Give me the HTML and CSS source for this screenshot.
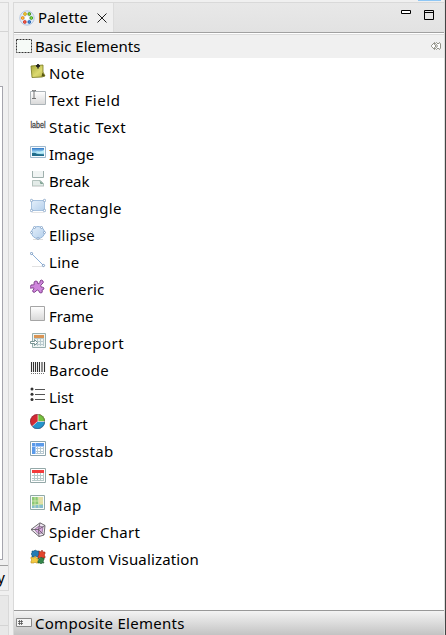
FILE: index.html
```html
<!DOCTYPE html>
<html lang="en">
<head>
<meta charset="utf-8">
<title>Palette</title>
<link rel="stylesheet" href="styles.css">
</head>
<body>
<svg width="0" height="0" class="defs"><defs>
<linearGradient id="gray" x2="0" y2="1"><stop stop-color="#fff"/><stop offset="1" stop-color="#d8d8d8"/></linearGradient>
<linearGradient id="blue" x2="1" y2="1"><stop stop-color="#e4effa"/><stop offset="1" stop-color="#b5d0ec"/></linearGradient>
<linearGradient id="note" x2="1" y2="1"><stop stop-color="#a5a638"/><stop offset=".55" stop-color="#dcda70"/><stop offset="1" stop-color="#b5b248"/></linearGradient>
<linearGradient id="sky" x2="0" y2="1"><stop stop-color="#2e78c8"/><stop offset=".6" stop-color="#b6e8fa"/><stop offset="1" stop-color="#287c9a"/></linearGradient>
</defs></svg>
<div class="workbench">
  <aside class="side">
    <section class="editor">
      <div class="editor-bar"></div>
      <div class="editor-body"><div class="canvas"></div></div>
      <div class="editor-foot"><span>y</span></div>
    </section>
    <section class="lower"><div class="lower-bar"></div></section>
  </aside>
  <main class="palette">
    <header class="tabs">
      <div class="tab">
        <svg width="16" height="16" viewBox="0 0 16 16"><circle cx="8" cy="8" r="7.200" fill="#dfe9f7" stroke="#b4c8e2"/><circle cx="8" cy="8" r="2" fill="#fff"/><g stroke-width=".8"><circle cx="6" cy="4" r="1.400" fill="#f4d34c" stroke="#c89600"/><circle cx="10.300" cy="4" r="1.400" fill="#8bd243" stroke="#398b12"/><circle cx="3.700" cy="8" r="1.400" fill="#ffc14a" stroke="#e47d00"/><circle cx="12.300" cy="8" r="1.400" fill="#8bd94a" stroke="#349610"/><circle cx="5.800" cy="12" r="1.400" fill="#f06550" stroke="#cb2618"/><circle cx="10.300" cy="12" r="1.400" fill="#4785d8" stroke="#175dac"/></g></svg>
        <span class="title">Palette</span>
        <svg class="close" width="10" height="10" viewBox="0 0 10 10"><path d="M.5.5l9 9M9.500.5l-9 9" stroke="#222" fill="none"/></svg>
      </div>
      <div class="tools">
        <svg width="10" height="4"><path d="M.5.5h9v3h-9z" fill="#fff" stroke="#000"/></svg>
        <svg width="10" height="10"><path d="M.5.5h9v9h-9zM0 2.500h10" fill="none" stroke="#000"/></svg>
      </div>
    </header>
    <div class="drawer">
      <svg class="marquee" width="16" height="14"><path d="M.5.5h15v13H.5z" fill="#f6faf7" stroke="#333" stroke-dasharray="2 1"/></svg>
      <span>Basic Elements</span>
      <svg class="pin" width="10" height="8" viewBox="0 0 10 8"><path d="M3.500.5L.5 3.500v1l3 3V5.500L5 4 3.500 2.500zM5.500.5L4.500 1.500 6.500 4l-2 2.500 1 1L7 6l1.500 1.500 1-1.500V2l-1-1.500L7 2z" fill="#fff" stroke="#77776b" stroke-width=".8"/></svg>
    </div>
    <ul class="items">
      <li><svg width="16" height="16"><path d="M1 3l12-1v7l2 4-3 1-10 .5z" fill="url(#note)" stroke="#77771d" stroke-width=".8"/><path d="M11.500 13.500l1-4 2.500 3.500z" fill="#565612"/><path d="M6 3l2-2 2 2-2 1.500zM8 2v4" fill="#222" stroke="#222" stroke-width=".8"/></svg><span class="s3">Note</span></li>
      <li><svg width="16" height="16"><path d="M.5 1.500h15v13H.5z" fill="url(#gray)" stroke="#adb4b8"/><path d="M2 .5h1.500L4 1l.5-.5H6M4 1v7M2 8.500h4" fill="none" stroke="#555" stroke-width=".8"/></svg><span class="s5">Text Field</span></li>
      <li><svg class="label-icon" width="16" height="16"><text x=".5" y="11" class="label-glyph" textLength="15" lengthAdjust="spacingAndGlyphs">label</text></svg><span class="s5">Static Text</span></li>
      <li><svg width="16" height="16"><path d="M.5 2.500h15v11H.5z" fill="#f7fbff" stroke="#9eb8cd"/><path d="M2 4h12v8H2z" fill="url(#sky)"/><path d="M2 9q3-1 5 1l7 .5V12H2z" fill="#206d8c"/><path d="M6 7q4 2 8-1v3q-4 1-6 0z" fill="#c0f0fa"/></svg><span>Image</span></li>
      <li><svg width="16" height="16"><path d="M2.500 0v6.500h11V0" fill="#f0f4f3" stroke="#9fb0ad"/><path d="M2.500 15v-5.500h8l3 3V15z" fill="#e3ebe8" stroke="#b3c2bd"/><path d="M9.500 9.500l4 3.500h-3z" fill="#799f8d"/><path d="M2 15.500h12" stroke="#ddd"/></svg><span>Break</span></li>
      <li><svg width="16" height="16"><path d="M1.500 2.500h13v10h-13z" fill="url(#blue)" stroke="#a7c2df"/><path d="M2 14.500h12" stroke="#e5e5e5"/><g fill="#fff" stroke="#7b9cc2" stroke-width=".8"><circle cx="1.500" cy="2.500" r="1.200"/><circle cx="14.500" cy="2.500" r="1.200"/><circle cx="1.500" cy="12.500" r="1.200"/><circle cx="14.500" cy="12.500" r="1.200"/></g></svg><span class="s3">Rectangle</span></li>
      <li><svg width="16" height="16"><ellipse cx="8" cy="7.500" rx="6.500" ry="6" fill="url(#blue)" stroke="#96b7da"/><path d="M3 14.500h10" stroke="#ddd"/><g fill="#fff" stroke="#7b9cc2" stroke-width=".8"><circle cx="4.500" cy="2.500" r="1"/><circle cx="11.500" cy="2.500" r="1"/><circle cx="1.500" cy="7.500" r="1"/><circle cx="14.500" cy="7.500" r="1"/><circle cx="8" cy="13.500" r="1"/></g></svg><span class="s1">Ellipse</span></li>
      <li><svg width="16" height="16"><path d="M2 14.500h12" stroke="#e2e2e2"/><path d="M1.500 1.500l12 12" stroke="#8db0d7"/><g fill="#fff" stroke="#799bc3"><circle cx="1.500" cy="1.500" r="1.100"/><circle cx="13.500" cy="13.500" r="1.100"/></g></svg><span class="s2">Line</span></li>
      <li><svg width="16" height="16"><path d="M1 7q0-2 2-1 2 0 1-2 0-2 2-2t2 3q3-1 2-3 1-2 3 0 1 2-1 3-2 1-1 3 2 0 3 1 0 2-2 2 1 3-1 3-2 0-2-2-2-2-3 0-1 2-3 1-1-2 1-3 0-2-2-1-3 1-3-2z" fill="#cf86dc" stroke="#84458f"/></svg><span class="s1">Generic</span></li>
      <li><svg width="16" height="16"><path d="M.5.5h14v14H.5z" fill="url(#gray)" stroke="#a5a5a5"/></svg><span>Frame</span></li>
      <li><svg width="16" height="16"><path d="M2.500.5h13v14h-13z" fill="#eef5f3" stroke="#97aead"/><path d="M4 2h10v3H4z" fill="#d89454"/><path d="M4 5.500h10M4 8.500h10M4 11.500h10M7.500 5v8M10.500 5v8M13.500 5v8" stroke="#b8c9cd"/><path d="M.5 8.500h4v-2l3 3-3 3v-2h-4z" fill="#fff" stroke="#789493"/></svg><span class="s4">Subreport</span></li>
      <li><svg width="16" height="16"><path d="M1.500 2v10M3.500 2v10M5.500 2v10M7.500 2v10M9.500 2v10M12 2v10M14.500 2v10" stroke="#333" stroke-width="1.100"/><path d="M1 13.500h14" stroke="#777" stroke-dasharray="1 1"/></svg><span class="s2">Barcode</span></li>
      <li><svg width="16" height="16"><path d="M5 2.500h10M5 7.500h10M5 12.500h10" stroke="#555"/><g fill="#333"><circle cx="2" cy="2" r="1.500"/><circle cx="2" cy="7.200" r="1.500"/><circle cx="2" cy="12.500" r="1.500"/></g></svg><span class="s1">List</span></li>
      <li><svg width="16" height="16"><circle cx="7.500" cy="7.500" r="7.500" fill="#d42a32"/><path d="M8 7.500V0a7.500 7.500 0 0 1 7 7.500z" fill="#76c33e"/><path d="M7.500 7.500H15a7.500 7.500 0 0 1-13 5z" fill="#2495cc"/><path d="M8 0v7.500h7M7.500 7.500l-5.500 5" stroke="#eee" fill="none" stroke-width=".7"/><circle cx="7.500" cy="7.500" r="7" fill="none" stroke="#335" stroke-opacity=".35"/></svg><span>Chart</span></li>
      <li><svg width="16" height="16"><path d="M.5.5h15v14H.5z" fill="#fff" stroke="#8da4ab"/><path d="M2 2h12v3H2zM2 2h3v11H2z" fill="#5a9ae8"/><path d="M5 7.500h9M5 10.500h9M5 12.500h9M7.500 5v8M10.500 5v8M13.500 5v8" stroke="#b6c8d0"/><path d="M5.500 2v11M2 5.500h12" stroke="#a6cafa"/></svg><span class="s3">Crosstab</span></li>
      <li><svg width="16" height="16"><path d="M.5.5h15v14H.5z" fill="#fff" stroke="#94a8a8"/><path d="M2 2h12v3H2z" fill="#f43c3c"/><path d="M2 7.500h12M2 10.500h12M2 12.500h12M4.500 5v8M7.500 5v8M10.500 5v8M13.500 5v8" stroke="#b8cac9"/></svg><span class="s5">Table</span></li>
      <li><svg width="16" height="16"><path d="M.5.5h14v14H.5z" fill="#f7fbfa" stroke="#91aaa7"/><path d="M2 2h11v11H2z" fill="#8cc775"/><path d="M8 2h5v7H9z" fill="#e4dda1"/><path d="M2 11l6-2 5 1v3H2z" fill="#85bdce"/><path d="M5 2v11M8 2l1 11M2 6h11M2 10l11-1" stroke="#d8ebb5" stroke-width=".8"/></svg><span class="s5">Map</span></li>
      <li><svg width="16" height="16"><path d="M1 7.500L10 .8l5 2.700-1 9.500-5 1.500z" fill="#f1eaf3" stroke="#5e5960" stroke-width=".9"/><path d="M4.500 7.500L9 4l4 1-1 6-4 .5z" fill="#dba9e2" stroke="#8c6d92" stroke-width=".8"/><path d="M1 7.500h7.500L10 1M8.500 7.500l6.500-4M8.500 7.500L14 13M8.500 7.500L9 14.500" fill="none" stroke="#5e5960" stroke-width=".8"/></svg><span class="s2">Spider Chart</span></li>
      <li><svg width="16" height="16"><path d="M2 2h2l1-1 2 1h2v6H7L5 7 4 8H2V6L1 5l1-1z" fill="#237bb4" stroke="#165375" stroke-width=".6"/><path d="M9 2l2 1 1-2 1 2h2v2l-1 1 1 1v2h-3l-1-1-1 1H8V7l1-1z" fill="#e3452d" stroke="#9d2b1c" stroke-width=".6"/><path d="M1 8l3 1 1-2 1 2h2v5H6l-1-1-1 1H1v-2l1-1-1-1z" fill="#f4ca42" stroke="#b88b20" stroke-width=".6"/><path d="M8 9l2 1 1-2 1 1h2v2l-1 1 1 2h-2l-1 1-1-1H8v-2l1-1z" fill="#34874a" stroke="#1e5931" stroke-width=".6"/></svg><span class="s1">Custom Visualization</span></li>
    </ul>
    <footer class="drawer composite">
      <svg width="16" height="10"><path d="M.5.5h15v8H.5z" fill="#f4f4f4" stroke="#888"/><path d="M3.500 2v5M5.500 2v5M2 3.500h5M2 5.500h5" stroke="#555" stroke-width=".8"/></svg>
      <span class="s2">Composite Elements</span>
    </footer>
  </main>
  <div class="edge"></div>
</div>
<div class="highlight"></div>
</body>
</html>
```
FILE: styles.css
```css
* { box-sizing: border-box; }
body { margin: 0; width: 446px; height: 635px; overflow: hidden; background: #f0f0f0; color: #000; font: 15px/27px "Noto Sans", "Open Sans", sans-serif; }
svg { display: block; flex: none; }
.defs { position: absolute; }
.workbench { display: flex; height: 635px; padding-top: 2px; }
.side { width: 9px; margin-right: 4px; display: flex; flex-direction: column; gap: 4px; }
.editor { height: 589px; border: solid #d9d9d9; border-width: 1px 1px 1px 0; display: flex; flex-direction: column; }
.editor-bar { height: 29px; border-bottom: 1px solid #d4d4d4; }
.editor-body { height: 534px; padding-top: 54px; border-bottom: 1px solid #a0a0a0; }
.canvas { width: 3px; height: 474px; background: #fff; border: solid #a5a5ad; border-width: 1px 1px 1px 0; }
.editor-foot { height: 24px; line-height: 22px; display: flex; justify-content: flex-end; padding-right: 3px; }
.lower { flex: 1; border: solid #d9d9d9; border-width: 1px 1px 0 0; background: #e8e8e8; }
.lower-bar { height: 30px; border-bottom: 1px solid #d4d4d4; }
.palette { width: 431px; border-left: 1px solid #d9d9d9; border-top: 1px solid #d9d9d9; background: #fff; display: flex; flex-direction: column; }
.tabs { height: 30px; background: linear-gradient(#e8e8e8, #e2e2e2); border-bottom: 1px solid #a0a0a0; display: flex; justify-content: space-between; }
.tab { width: 100px; height: 29px; background: #f0f0f0; border-right: 1px solid #dcdcdc; display: flex; align-items: center; padding-left: 5px; }
.title { width: 50px; margin-left: 3px; white-space: nowrap; letter-spacing: .15px; }
.close { margin-left: 9px; }
.tools { display: flex; gap: 13px; padding: 7px 10px 0 0; }
.drawer { height: 24px; margin-top: 1px; border-top: 1px solid #ddd; background: #f0f0f0; display: flex; align-items: center; padding: 0 3px 0 2px; gap: 3px; line-height: 22px; white-space: nowrap; }
.drawer span { margin-top: -2px; }
.marquee { margin-top: -2px; }
.pin { margin-left: auto; margin-top: -1px; }
.items { list-style: none; margin: 0; padding: 2px 0 0 16px; flex: 1; }
.items li { display: flex; height: 27px; gap: 3px; white-space: nowrap; }
.items svg { margin-top: 3px; }
.label-icon { overflow: visible; }
.label-glyph { font: 9px "Liberation Sans", sans-serif; fill: #333; stroke: #555; stroke-width: .3px; }
.s1 { letter-spacing: .15px; }
.s2 { letter-spacing: .27px; }
.s3 { letter-spacing: .34px; }
.s4 { letter-spacing: .45px; }
.s5 { letter-spacing: .55px; }
.composite { height: 25px; margin: 0; border-top: 1px solid #999; background: linear-gradient(#f4f4f4, #c3c3c3); }
.composite span { margin-top: 0; }
.edge { width: 2px; margin-top: -2px; border-left: 1px solid #ddd; background: #444; }
.highlight { position: absolute; top: 0; left: 418px; width: 23px; height: 1px; background: #8fc7f5; }
```
